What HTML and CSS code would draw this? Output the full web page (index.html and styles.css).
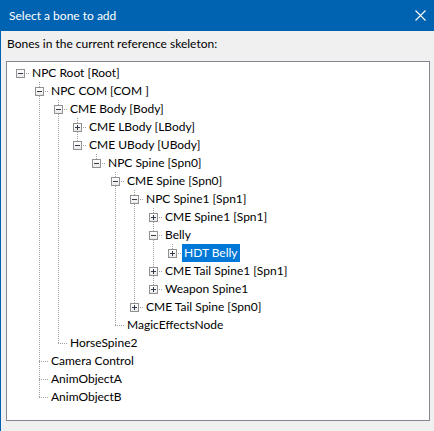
FILE: index.html
```html
<!DOCTYPE html>
<html>
<head>
<meta charset="utf-8">
<title>Select a bone to add</title>
<link rel="stylesheet" href="styles.css">
</head>
<body>
<div class="window">
  <div class="titlebar">
    <span class="title">Select a bone to add</span>
    <svg class="close" width="11" height="11" viewBox="0 0 11 11"><path d="M0.5 0.5L10.5 10.5M10.5 0.5L0.5 10.5" stroke="#fff" stroke-width="1.1" fill="none"/></svg>
  </div>
  <div class="content">
    <div class="caption">Bones in the current reference skeleton:</div>
    <div class="tree">
      <div class="row"><span class="c r"><i class="box minus"></i></span><span class="label">NPC Root [Root]</span></div>
      <div class="row"><span class="c"></span><span class="c t"><i class="box minus"></i></span><span class="label">NPC COM [COM ]</span></div>
      <div class="row"><span class="c"></span><span class="c v"></span><span class="c t"><i class="box minus"></i></span><span class="label">CME Body [Body]</span></div>
      <div class="row"><span class="c"></span><span class="c v"></span><span class="c v"></span><span class="c t"><i class="box plus"></i></span><span class="label">CME LBody [LBody]</span></div>
      <div class="row"><span class="c"></span><span class="c v"></span><span class="c v"></span><span class="c e"><i class="box minus"></i></span><span class="label">CME UBody [UBody]</span></div>
      <div class="row"><span class="c"></span><span class="c v"></span><span class="c v"></span><span class="c"></span><span class="c e"><i class="box minus"></i></span><span class="label">NPC Spine [Spn0]</span></div>
      <div class="row"><span class="c"></span><span class="c v"></span><span class="c v"></span><span class="c"></span><span class="c"></span><span class="c t"><i class="box minus"></i></span><span class="label">CME Spine [Spn0]</span></div>
      <div class="row"><span class="c"></span><span class="c v"></span><span class="c v"></span><span class="c"></span><span class="c"></span><span class="c v"></span><span class="c t"><i class="box minus"></i></span><span class="label">NPC Spine1 [Spn1]</span></div>
      <div class="row"><span class="c"></span><span class="c v"></span><span class="c v"></span><span class="c"></span><span class="c"></span><span class="c v"></span><span class="c v"></span><span class="c t"><i class="box plus"></i></span><span class="label">CME Spine1 [Spn1]</span></div>
      <div class="row"><span class="c"></span><span class="c v"></span><span class="c v"></span><span class="c"></span><span class="c"></span><span class="c v"></span><span class="c v"></span><span class="c t"><i class="box minus"></i></span><span class="label">Belly</span></div>
      <div class="row"><span class="c"></span><span class="c v"></span><span class="c v"></span><span class="c"></span><span class="c"></span><span class="c v"></span><span class="c v"></span><span class="c v"></span><span class="c e"><i class="box plus"></i></span><span class="label selected">HDT Belly</span></div>
      <div class="row"><span class="c"></span><span class="c v"></span><span class="c v"></span><span class="c"></span><span class="c"></span><span class="c v"></span><span class="c v"></span><span class="c t"><i class="box plus"></i></span><span class="label">CME Tail Spine1 [Spn1]</span></div>
      <div class="row"><span class="c"></span><span class="c v"></span><span class="c v"></span><span class="c"></span><span class="c"></span><span class="c v"></span><span class="c v"></span><span class="c e"><i class="box plus"></i></span><span class="label">Weapon Spine1</span></div>
      <div class="row"><span class="c"></span><span class="c v"></span><span class="c v"></span><span class="c"></span><span class="c"></span><span class="c v"></span><span class="c e"><i class="box plus"></i></span><span class="label">CME Tail Spine [Spn0]</span></div>
      <div class="row"><span class="c"></span><span class="c v"></span><span class="c v"></span><span class="c"></span><span class="c"></span><span class="c e"></span><span class="label">MagicEffectsNode</span></div>
      <div class="row"><span class="c"></span><span class="c v"></span><span class="c e"></span><span class="label">HorseSpine2</span></div>
      <div class="row"><span class="c"></span><span class="c t"></span><span class="label">Camera Control</span></div>
      <div class="row"><span class="c"></span><span class="c t"></span><span class="label">AnimObjectA</span></div>
      <div class="row"><span class="c"></span><span class="c e"></span><span class="label">AnimObjectB</span></div>
    </div>
  </div>
</div>
</body>
</html>
```
FILE: styles.css
```css
html, body {
  margin: 0;
  padding: 0;
}

body {
  width: 434px;
  height: 431px;
  overflow: hidden;
  background: #f0f0f0;
  font-family: "Lato", "Noto Sans", sans-serif;
  font-size: 12px;
  color: #000;
}

.window {
  height: 431px;
  border-left: 1px solid #0063b1;
  box-sizing: border-box;
}

.titlebar {
  height: 31px;
  background: #0063b1;
  color: #fff;
  display: flex;
  align-items: center;
  justify-content: space-between;
  padding: 0 8px 0 8px;
}

.title {
  line-height: 16px;
  padding-top: 1px;
}

.close {
  display: block;
}

.content {
  padding: 5px 0 0 0;
}

.caption {
  line-height: 16px;
  padding-left: 6px;
}

.tree {
  margin: 9px 0 0 5px;
  width: 424px;
  height: 360px;
  box-sizing: border-box;
  border: 1px solid #828790;
  background: #fff;
  padding: 2px 0 0 4px;
}

.row {
  display: flex;
  height: 18px;
}

/* one indentation column of the tree: dotted guide lines drawn by pseudo-elements */
.c {
  position: relative;
  flex: none;
  width: 19px;
  height: 18px;
}

.c.v::before,
.c.t::before,
.c.e::before {
  content: "";
  position: absolute;
  left: 9px;
  top: 0;
  width: 1px;
  height: 18px;
  background: repeating-linear-gradient(to bottom, #a0a0a0 0 1px, transparent 1px 2px);
}

.c.e::before {
  height: 10px;
}

.c.t::after,
.c.e::after,
.c.r::after {
  content: "";
  position: absolute;
  left: 9px;
  top: 9px;
  width: 10px;
  height: 1px;
  background: repeating-linear-gradient(to right, #a0a0a0 0 1px, transparent 1px 2px);
}

/* expand / collapse button */
.box {
  position: absolute;
  z-index: 1;
  left: 5px;
  top: 5px;
  width: 9px;
  height: 9px;
  box-sizing: border-box;
  border: 1px solid #919191;
  background: linear-gradient(#ffffff, #e9e9e9);
}

.box::before {
  content: "";
  position: absolute;
  left: 1px;
  top: 3px;
  width: 5px;
  height: 1px;
  background: #333c48;
}

.box.plus::after {
  content: "";
  position: absolute;
  left: 3px;
  top: 1px;
  width: 1px;
  height: 5px;
  background: #333c48;
}

.label {
  padding: 0 2px;
  line-height: 18px;
  white-space: nowrap;
}

.label.selected {
  background: #0078d7;
  color: #fff;
}
```
